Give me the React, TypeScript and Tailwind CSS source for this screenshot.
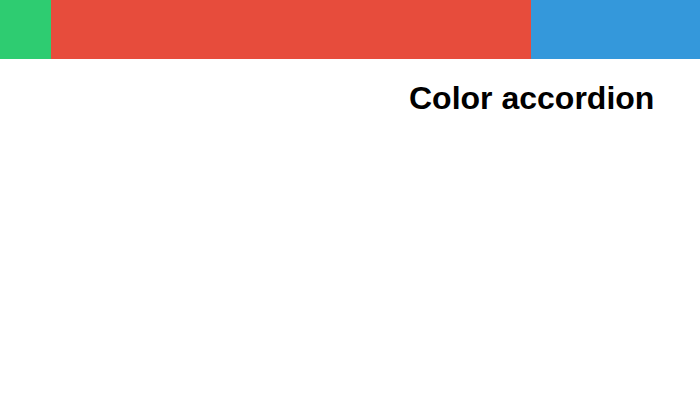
export default function App() {
  return (
    <div className="w-[700px] h-[400px] bg-white" style={{ fontFamily: '"Liberation Sans", Arial, sans-serif' }}>
      <div className="flex h-[59px]">
        <div className="w-[51px] bg-[#2ecc71]" />
        <div className="w-[480px] bg-[#e74c3c]" />
        <div className="flex-1 bg-[#3498db]" />
      </div>
      <h1 className="mt-[21px] pl-[409px] text-[32px] leading-[36px] font-bold text-black">Color accordion</h1>
    </div>
  );
}
